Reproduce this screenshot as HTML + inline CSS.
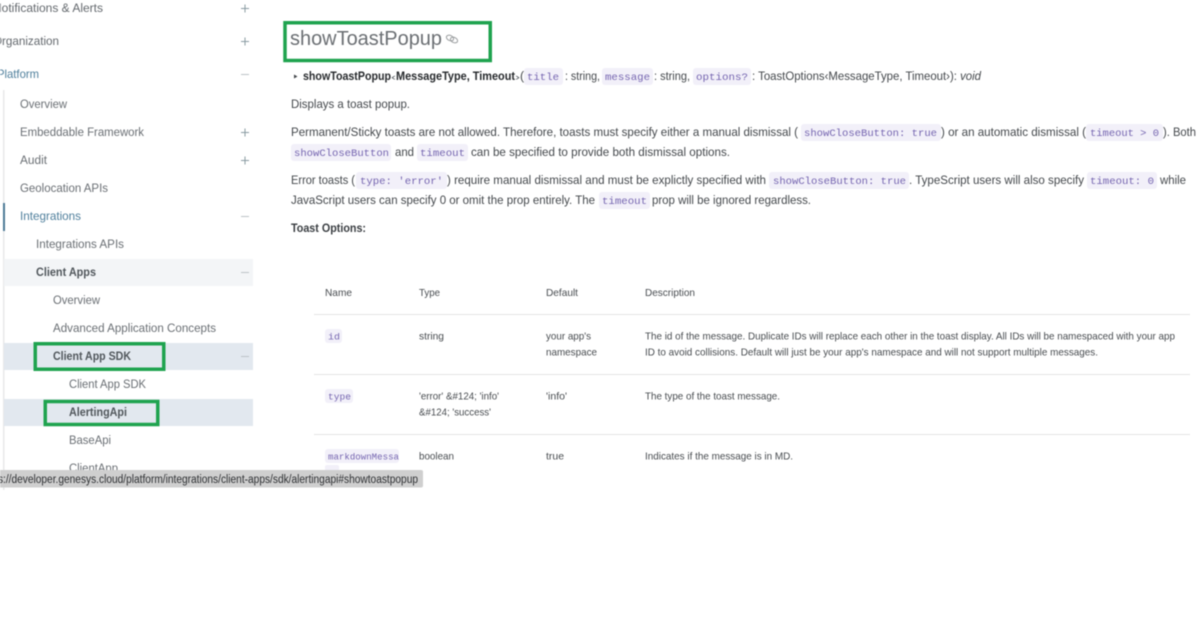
<!DOCTYPE html>
<html>
<head>
<meta charset="utf-8">
<title>showToastPopup</title>
<style>
html,body{margin:0;padding:0;background:#fff;width:1200px;height:623px;overflow:hidden}
svg{display:block;position:absolute;left:0;top:0;filter:blur(.4px)}
text{font-family:"Liberation Sans",Arial,sans-serif;font-size:12px;fill:#555b60;white-space:pre}
.n{fill:#6a6f74;font-size:12.2px}
.b{font-weight:700;fill:#50565b}
.bl{fill:#4f7f9c}
.p{fill:#44484c;font-size:12.2px}
.d{fill:#26292c;font-weight:700}
.c{font-family:"Liberation Mono",monospace;font-size:10.5px;fill:#7565b0}
.t{font-size:10.4px;fill:#484c50}
.pill{fill:#f2f0f9}
.ic{stroke:#8a9ba3;stroke-width:1;fill:none}
.g{fill:none;stroke:#1fa34f;stroke-width:3.5}
.line{fill:#e4e4e4}
</style>
</head>
<body>
<svg width="1200" height="623" viewBox="0 0 1200 623" xmlns="http://www.w3.org/2000/svg">
<rect width="1200" height="623" fill="#fff"/>

<!-- sidebar -->
<rect x="3" y="90" width="1.5" height="400" fill="#e8e9ea"/>
<rect x="3" y="203" width="2" height="28" fill="#4d7a96"/>
<rect x="4" y="259" width="249" height="27" fill="#f3f5f7"/>
<rect x="4" y="343" width="249" height="27" fill="#e2e8ef"/>
<rect x="4" y="399" width="249" height="27" fill="#e2e8ef"/>

<text class="n" x="-7" y="12" textLength="110" lengthAdjust="spacingAndGlyphs" style="fill:#64696e">Notifications &amp; Alerts</text>
<text class="n" x="-7" y="45" textLength="66" lengthAdjust="spacingAndGlyphs" style="fill:#64696e">Organization</text>
<text class="bl" x="-3" y="78" textLength="42" lengthAdjust="spacingAndGlyphs">Platform</text>
<text class="n" x="20" y="108" textLength="47" lengthAdjust="spacingAndGlyphs">Overview</text>
<text class="n" x="20" y="136" textLength="124" lengthAdjust="spacingAndGlyphs">Embeddable Framework</text>
<text class="n" x="20" y="164" textLength="27" lengthAdjust="spacingAndGlyphs">Audit</text>
<text class="n" x="20" y="192" textLength="88" lengthAdjust="spacingAndGlyphs">Geolocation APIs</text>
<text class="bl" x="20" y="220" textLength="61" lengthAdjust="spacingAndGlyphs">Integrations</text>
<text class="n" x="36" y="248" textLength="88" lengthAdjust="spacingAndGlyphs">Integrations APIs</text>
<text class="b" x="36" y="276" textLength="60" lengthAdjust="spacingAndGlyphs">Client Apps</text>
<text class="n" x="53" y="304" textLength="47" lengthAdjust="spacingAndGlyphs">Overview</text>
<text class="n" x="53" y="332" textLength="163" lengthAdjust="spacingAndGlyphs">Advanced Application Concepts</text>
<text class="b" x="53" y="360" textLength="78" lengthAdjust="spacingAndGlyphs">Client App SDK</text>
<text class="n" x="69" y="388" textLength="77" lengthAdjust="spacingAndGlyphs">Client App SDK</text>
<text class="b" x="69" y="416" textLength="58" lengthAdjust="spacingAndGlyphs">AlertingApi</text>
<text class="n" x="69" y="444" textLength="42" lengthAdjust="spacingAndGlyphs">BaseApi</text>
<text class="n" x="69" y="472" textLength="49" lengthAdjust="spacingAndGlyphs">ClientApp</text>

<!-- plus / minus icons -->
<path class="ic" d="M241 8.500h8M245 4.500v8M241 41.500h8M245 37.500v8M241 132.500h8M245 128.500v8M241 160.500h8M245 156.500v8"/>
<path class="ic" style="stroke:#bcc3c7" d="M241 74.500h8M241 216.500h8M241 272.500h8M241 356.500h8"/>

<!-- green highlight boxes -->
<rect class="g" x="35.250" y="343.750" width="128.500" height="25.500"/>
<rect class="g" x="45.250" y="401.500" width="112.500" height="23"/>
<rect class="g" x="285" y="22.750" width="205.250" height="37.750"/>

<!-- heading -->
<text x="290" y="45" textLength="152" lengthAdjust="spacingAndGlyphs" style="font-size:20.500px;fill:#6b6f73">showToastPopup</text>
<g fill="none" stroke="#9a9d9f" stroke-width="1">
<ellipse cx="450" cy="38" rx="3.800" ry="2.600" transform="rotate(25 450 38)"/>
<ellipse cx="454" cy="40" rx="3.800" ry="2.600" transform="rotate(25 454 40)"/>
</g>

<!-- signature line -->
<path d="M294 74.500l3.500 2-3.500 2z" fill="#44484c"/>
<text class="d" x="303" y="80" textLength="88" lengthAdjust="spacingAndGlyphs">showToastPopup</text>
<text x="391" y="80" textLength="5" lengthAdjust="spacingAndGlyphs" style="font-size:9px">‹</text>
<text class="d" x="396" y="80" textLength="119" lengthAdjust="spacingAndGlyphs">MessageType, Timeout</text>
<text x="515" y="80" textLength="5" lengthAdjust="spacingAndGlyphs" style="font-size:9px">›</text>
<text class="p" x="520" y="80">(</text>
<rect class="pill" x="524" y="68" width="39" height="17" rx="3"/>
<text class="c" x="527" y="80" textLength="32" lengthAdjust="spacingAndGlyphs">title</text>
<text class="p" x="565" y="80" textLength="35" lengthAdjust="spacingAndGlyphs">: string,</text>
<rect class="pill" x="602" y="68" width="51" height="17" rx="3"/>
<text class="c" x="605" y="80" textLength="45" lengthAdjust="spacingAndGlyphs">message</text>
<text class="p" x="654" y="80" textLength="36" lengthAdjust="spacingAndGlyphs">: string,</text>
<rect class="pill" x="693" y="68" width="58" height="17" rx="3"/>
<text class="c" x="696" y="80" textLength="52" lengthAdjust="spacingAndGlyphs">options?</text>
<text class="p" x="752" y="80" textLength="229" lengthAdjust="spacingAndGlyphs">: ToastOptions‹MessageType, Timeout›): <tspan font-style="italic">void</tspan></text>

<!-- paragraphs -->
<text class="p" x="291" y="108" textLength="119" lengthAdjust="spacingAndGlyphs">Displays a toast popup.</text>

<text class="p" x="291" y="136" textLength="507" lengthAdjust="spacingAndGlyphs">Permanent/Sticky toasts are not allowed. Therefore, toasts must specify either a manual dismissal (</text>
<rect class="pill" x="801" y="124" width="140" height="17" rx="3"/>
<text class="c" x="804" y="136" textLength="133" lengthAdjust="spacingAndGlyphs">showCloseButton: true</text>
<text class="p" x="941" y="136" textLength="145" lengthAdjust="spacingAndGlyphs">) or an automatic dismissal (</text>
<rect class="pill" x="1086" y="124" width="77" height="17" rx="3"/>
<text class="c" x="1090" y="136" textLength="69" lengthAdjust="spacingAndGlyphs">timeout &gt; 0</text>
<text class="p" x="1163" y="136" textLength="33" lengthAdjust="spacingAndGlyphs">). Both</text>

<rect class="pill" x="291" y="144" width="100" height="17" rx="3"/>
<text class="c" x="294" y="156" textLength="95" lengthAdjust="spacingAndGlyphs">showCloseButton</text>
<text class="p" x="395" y="156" textLength="19" lengthAdjust="spacingAndGlyphs">and</text>
<rect class="pill" x="417" y="144" width="51" height="17" rx="3"/>
<text class="c" x="420" y="156" textLength="45" lengthAdjust="spacingAndGlyphs">timeout</text>
<text class="p" x="471" y="156" textLength="259" lengthAdjust="spacingAndGlyphs">can be specified to provide both dismissal options.</text>

<text class="p" x="291" y="184" textLength="64" lengthAdjust="spacingAndGlyphs">Error toasts (</text>
<rect class="pill" x="356" y="172" width="91" height="17" rx="3"/>
<text class="c" x="360" y="184" textLength="83" lengthAdjust="spacingAndGlyphs">type: 'error'</text>
<text class="p" x="447" y="184" textLength="319" lengthAdjust="spacingAndGlyphs">) require manual dismissal and must be explictly specified with</text>
<rect class="pill" x="769" y="172" width="140" height="17" rx="3"/>
<text class="c" x="773" y="184" textLength="133" lengthAdjust="spacingAndGlyphs">showCloseButton: true</text>
<text class="p" x="909" y="184" textLength="175" lengthAdjust="spacingAndGlyphs">. TypeScript users will also specify</text>
<rect class="pill" x="1087" y="172" width="70" height="17" rx="3"/>
<text class="c" x="1090" y="184" textLength="64" lengthAdjust="spacingAndGlyphs">timeout: 0</text>
<text class="p" x="1160" y="184" textLength="26" lengthAdjust="spacingAndGlyphs">while</text>

<text class="p" x="291" y="204" textLength="304" lengthAdjust="spacingAndGlyphs">JavaScript users can specify 0 or omit the prop entirely. The</text>
<rect class="pill" x="599" y="192" width="51" height="17" rx="3"/>
<text class="c" x="602" y="204" textLength="45" lengthAdjust="spacingAndGlyphs">timeout</text>
<text class="p" x="652" y="204" textLength="159" lengthAdjust="spacingAndGlyphs">prop will be ignored regardless.</text>

<text class="d" x="291" y="232" textLength="75" lengthAdjust="spacingAndGlyphs" style="fill:#3a3e42">Toast Options:</text>

<!-- table -->
<rect class="line" x="314" y="314" width="876" height="1"/>
<rect class="line" x="314" y="374" width="876" height="1"/>
<rect class="line" x="314" y="434" width="876" height="1"/>

<text class="t" x="325" y="296" textLength="27" lengthAdjust="spacingAndGlyphs">Name</text>
<text class="t" x="419" y="296" textLength="21" lengthAdjust="spacingAndGlyphs">Type</text>
<text class="t" x="546" y="296" textLength="32" lengthAdjust="spacingAndGlyphs">Default</text>
<text class="t" x="645" y="296" textLength="50" lengthAdjust="spacingAndGlyphs">Description</text>

<rect class="pill" x="325" y="329" width="17" height="14" rx="3"/>
<text class="c" x="328" y="339.500" textLength="12" lengthAdjust="spacingAndGlyphs" style="font-size:9.500px">id</text>
<text class="t" x="419" y="339.500" textLength="25" lengthAdjust="spacingAndGlyphs">string</text>
<text class="t" x="546" y="339.500" textLength="45" lengthAdjust="spacingAndGlyphs">your app's</text>
<text class="t" x="546" y="355.500" textLength="51" lengthAdjust="spacingAndGlyphs">namespace</text>
<text class="t" x="645" y="339.500" textLength="530" lengthAdjust="spacingAndGlyphs">The id of the message. Duplicate IDs will replace each other in the toast display. All IDs will be namespaced with your app</text>
<text class="t" x="645" y="355.500" textLength="453" lengthAdjust="spacingAndGlyphs">ID to avoid collisions. Default will just be your app's namespace and will not support multiple messages.</text>

<rect class="pill" x="325" y="389" width="28" height="14" rx="3"/>
<text class="c" x="328" y="399.500" textLength="23" lengthAdjust="spacingAndGlyphs" style="font-size:9.500px">type</text>
<text class="t" x="419" y="399.500" textLength="80" lengthAdjust="spacingAndGlyphs">'error' &amp;#124; 'info'</text>
<text class="t" x="419" y="415.500" textLength="72" lengthAdjust="spacingAndGlyphs">&amp;#124; 'success'</text>
<text class="t" x="546" y="399.500" textLength="21" lengthAdjust="spacingAndGlyphs">'info'</text>
<text class="t" x="645" y="399.500" textLength="135" lengthAdjust="spacingAndGlyphs">The type of the toast message.</text>

<rect class="pill" x="325" y="449" width="74" height="14" rx="3"/>
<rect class="pill" x="325" y="465" width="14" height="10" rx="2"/>
<text class="c" x="328" y="459.500" textLength="71" lengthAdjust="spacingAndGlyphs" style="font-size:9.500px">markdownMessa</text>
<text class="t" x="419" y="459.500" textLength="35" lengthAdjust="spacingAndGlyphs">boolean</text>
<text class="t" x="546" y="459.500" textLength="18" lengthAdjust="spacingAndGlyphs">true</text>
<text class="t" x="645" y="459.500" textLength="148" lengthAdjust="spacingAndGlyphs">Indicates if the message is in MD.</text>

<!-- status tooltip -->
<path d="M0 470H421a2 2 0 0 1 2 2V485.500a2 2 0 0 1-2 2H0z" fill="#cfcfcf"/>
<text x="-19" y="483" textLength="437" lengthAdjust="spacingAndGlyphs" style="font-size:11.500px;fill:#2e3033">https://developer.genesys.cloud/platform/integrations/client-apps/sdk/alertingapi#showtoastpopup</text>
</svg>
</body>
</html>
